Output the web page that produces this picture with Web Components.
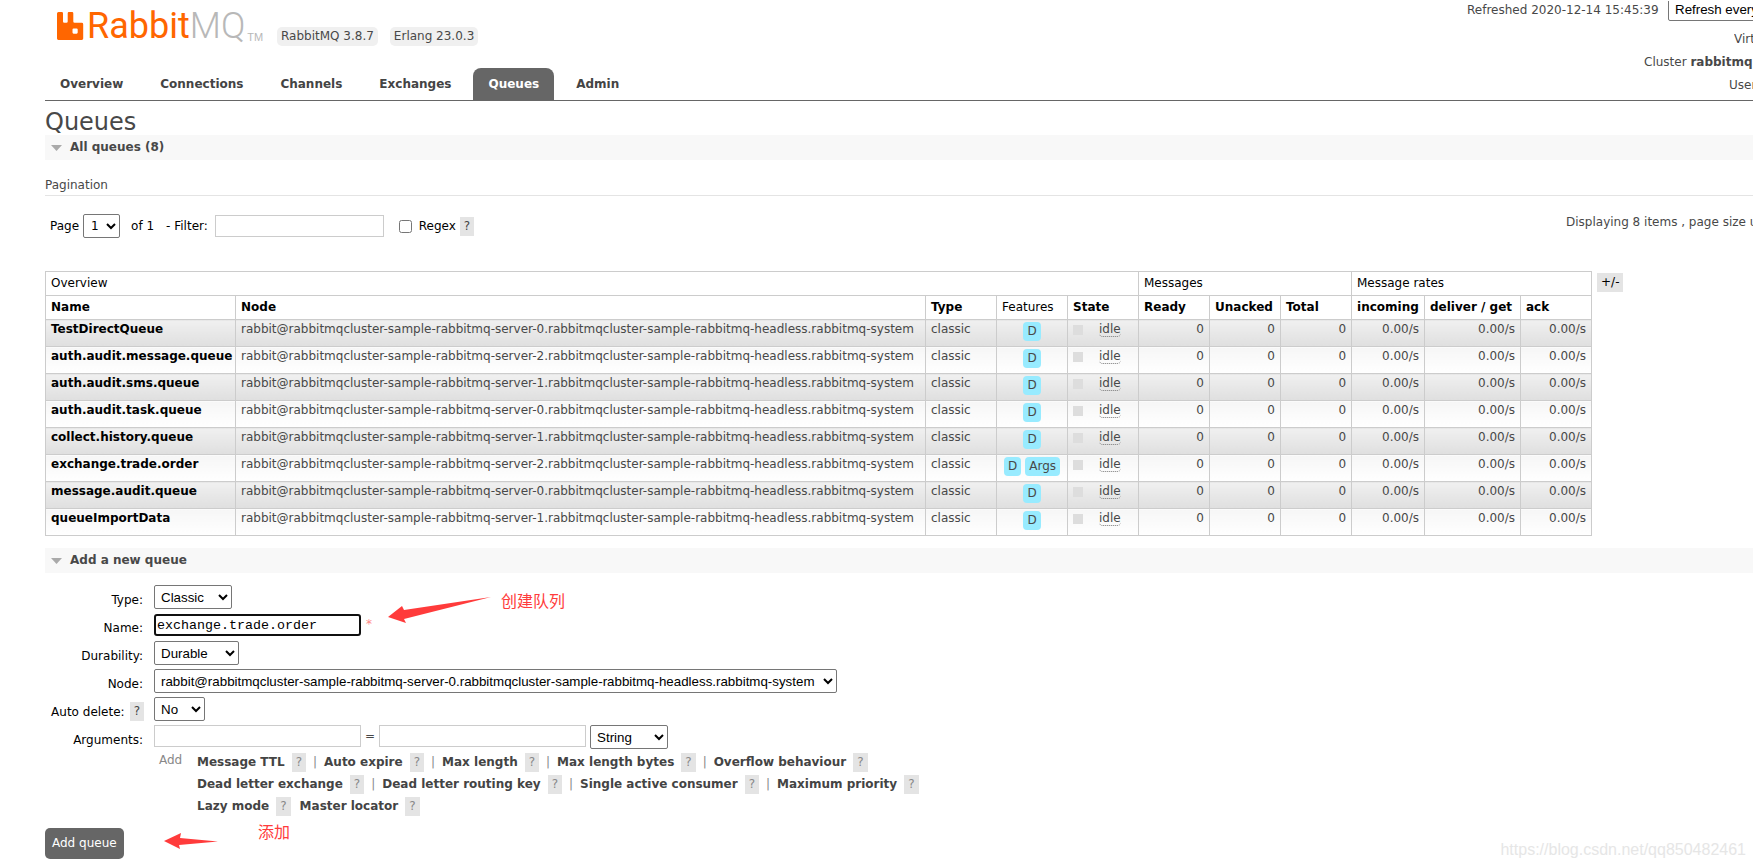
<!DOCTYPE html>
<html lang="en">
<head>
<meta charset="utf-8">
<title>RabbitMQ Management</title>
<style>
  body {
    margin: 0;
    position: relative;
    overflow-x: hidden;
    background: #fff;
    color: #484848;
    font: 12px/17px "DejaVu Sans", "Noto Sans CJK SC", sans-serif;
  }
  main {
    padding: 8px 0 9px 45px;
  }
  h1 {
    margin: 0;
    font-size: 24px;
    line-height: 26px;
    font-weight: normal;
  }
</style>
</head>
<body>
  <rmq-header></rmq-header>
  <main>
    <h1>Queues</h1>
    <rmq-section heading="All queues (8)">
      <rmq-pagination></rmq-pagination>
      <rmq-queue-table></rmq-queue-table>
    </rmq-section>
    <rmq-section heading="Add a new queue">
      <rmq-queue-form></rmq-queue-form>
    </rmq-section>
  </main>
  <rmq-watermark>https://blog.csdn.net/qq850482461</rmq-watermark>

<script>
const controls = /*css*/ `
  select, input, button { box-sizing: border-box; margin: 0; }
  select {
    height: 24px;
    padding: 0 2px;
    border: 1px solid #767676;
    border-radius: 2px;
    background-color: #fff;
    color: #000;
    font-family: "Liberation Sans", sans-serif;
  }
  input[type="text"] {
    height: 22px;
    padding: 2px;
    border: 1px solid #ccc;
    background: #fff;
    color: #000;
    font-family: "Liberation Mono", monospace;
  }
`;

class RmqElement extends HTMLElement {
  constructor() {
    super();
    this.attachShadow({ mode: "open" });
  }

  connectedCallback() {
    const template = document.createElement("template");
    template.innerHTML = this.template();
    this.shadowRoot.appendChild(template.content.cloneNode(true));
  }
}

class RmqHelp extends RmqElement {
  template() {
    return /*html*/ `
      <style>
        :host { display: inline-block; }
        a {
          display: block;
          padding: 1px 4px;
          background: #e4e4e4;
          color: inherit;
          text-decoration: none;
        }
      </style>
      <a href="#"><slot>?</slot></a>
    `;
  }
}

class RmqTab extends RmqElement {
  template() {
    return /*html*/ `
      <style>
        :host { display: block; }
        a {
          display: block;
          padding: 8px 15px 7px;
          border-radius: 8px 8px 0 0;
          color: #444;
          font-weight: bold;
          text-decoration: none;
        }
        :host([selected]) a {
          background: #666;
          color: #fff;
        }
      </style>
      <a href="#"><slot></slot></a>
    `;
  }
}

class RmqLogo extends RmqElement {
  template() {
    return /*html*/ `
      <style>
        :host { display: block; }
        a {
          display: flex;
          align-items: flex-end;
          color: #f60;
          font: 300 36px/36px Roboto, sans-serif;
          text-decoration: none;
        }
        svg { display: block; margin: 0 3px 4px 0; }
        b { font-weight: 400; }
        span { color: #b8b8b8; }
        small { color: #b8b8b8; font: 11px/14px "Liberation Sans", sans-serif; margin-left: 2px; }
      </style>
      <a href="#">
        <svg width="27" height="28" viewBox="0 0 27 28">
          <path fill="#f60" fill-rule="evenodd" d="M1.500 0h3.300q1.200 0 1.200 1.200v8.300q0 1.300 1.300 1.300h2.100q1.300 0 1.300-1.300V1.200Q10.700 0 11.900 0h3.200q1.200 0 1.200 1.200v8.300q0 1.300 1.300 1.300h7.200q1.400 0 1.400 1.400V26.600q0 1.400-1.400 1.400H1.400Q0 28 0 26.600V1.500Q0 0 1.500 0ZM16.600 16.500q-1.100 0-1.100 1.100v3q0 1.100 1.100 1.100h3q1.100 0 1.100-1.100v-3q0-1.100-1.100-1.100Z"/>
        </svg>
        <b>Rabbit</b><span>MQ</span><small>TM</small>
      </a>
    `;
  }
}

class RmqHeader extends RmqElement {
  template() {
    return /*html*/ `
      <style>
        ${controls}
        :host {
          display: flex;
          justify-content: space-between;
          margin-left: 45px;
          padding-top: 1px;
          border-bottom: 1px solid #666;
        }
        .brand {
          display: flex;
          align-items: flex-end;
          height: 43px;
          padding-left: 12px;
        }
        .version {
          margin: 0 0 -2px 12px;
          padding: 1px 4px;
          border-radius: 5px;
          background: #f0f0f0;
        }
        rmq-logo { width: 208px; }
        nav { display: flex; gap: 7px; margin-top: 24px; }
        ul {
          display: flex;
          flex-direction: column;
          align-items: flex-end;
          margin: 0;
          padding: 0;
          list-style: none;
        }
        li {
          overflow: hidden;
          white-space: nowrap;
        }
        .refresh { width: 286px; display: flex; height: 21px; line-height: 19px; }
        .refresh label { flex: 0 0 201px; }
        .refresh select { flex: none; width: 150px; margin-top: -4px; }
        .host { width: 19px; height: 32px; line-height: 34px; }
        .cluster { width: 109px; height: 17px; line-height: 17px; }
        .user { width: 24px; height: 28px; line-height: 28px; }
      </style>
      <div>
        <div class="brand">
          <rmq-logo></rmq-logo>
          <span class="version">RabbitMQ 3.8.7</span>
          <span class="version">Erlang 23.0.3</span>
        </div>
        <nav>
          <rmq-tab>Overview</rmq-tab>
          <rmq-tab>Connections</rmq-tab>
          <rmq-tab>Channels</rmq-tab>
          <rmq-tab>Exchanges</rmq-tab>
          <rmq-tab selected>Queues</rmq-tab>
          <rmq-tab>Admin</rmq-tab>
        </nav>
      </div>
      <ul>
        <li class="refresh">
          <label for="refresh">Refreshed 2020-12-14 15:45:39</label>
          <select id="refresh"><option>Refresh every</option></select>
        </li>
        <li class="host">Virt</li>
        <li class="cluster">Cluster <b>rabbitmq</b></li>
        <li class="user">User</li>
      </ul>
    `;
  }
}

class RmqSection extends RmqElement {
  template() {
    return /*html*/ `
      <style>
        :host { display: block; margin-bottom: 12px; }
        :host(:last-of-type) { margin-bottom: 0; }
        h2 {
          display: flex;
          align-items: center;
          gap: 8px;
          margin: 0;
          padding: 4px 6px;
          background: #f8f8f8;
          font-size: 12px;
          line-height: 17px;
        }
      </style>
      <h2>
        <svg width="11" height="6" viewBox="0 0 11 6"><path fill="#aaa" d="M0 0h11L5.500 6z"/></svg>
        ${this.getAttribute("heading")}
      </h2>
      <slot></slot>
    `;
  }
}

class RmqPagination extends RmqElement {
  template() {
    return /*html*/ `
      <style>
        ${controls}
        :host { display: block; padding-top: 17px; }
        h3 {
          margin: 0;
          padding-bottom: 1px;
          border-bottom: 1px solid #e4e4e4;
          font-size: 12px;
          font-weight: normal;
        }
        .row {
          display: flex;
          justify-content: space-between;
          padding: 18px 0 33px;
        }
        form {
          display: flex;
          align-items: center;
          padding-left: 5px;
          color: #000;
        }
        #page { width: 37px; margin: 0 11px 0 4px; padding-left: 3px; font-family: "DejaVu Sans", sans-serif; font-size: 12px; }
        #filter { width: 169px; margin: 0 15px 0 7px; }
        #regex { width: 13px; height: 13px; margin-right: 7px; }
        .filter { margin-left: 12px; }
        rmq-help { margin-left: 4px; color: #444; }
        .count { width: 187px; overflow: hidden; white-space: nowrap; }
      </style>
      <h3>Pagination</h3>
      <div class="row">
        <form>
          <label for="page">Page</label>
          <select id="page"><option>1</option></select>
          <span>of 1</span>
          <label class="filter" for="filter">- Filter:</label>
          <input type="text" id="filter">
          <input type="checkbox" id="regex">
          <label for="regex">Regex</label>
          <rmq-help></rmq-help>
        </form>
        <span class="count">Displaying 8 items , page size u</span>
      </div>
    `;
  }
}

const queues = [
  { name: "TestDirectQueue", server: 0 },
  { name: "auth.audit.message.queue", server: 2 },
  { name: "auth.audit.sms.queue", server: 1 },
  { name: "auth.audit.task.queue", server: 0 },
  { name: "collect.history.queue", server: 1 },
  { name: "exchange.trade.order", server: 2, args: true },
  { name: "message.audit.queue", server: 0 },
  { name: "queueImportData", server: 1 },
];

const nodeName = (n) =>
  `rabbit@rabbitmqcluster-sample-rabbitmq-server-${n}.rabbitmqcluster-sample-rabbitmq-headless.rabbitmq-system`;

class RmqQueueTable extends RmqElement {
  row(queue) {
    return /*html*/ `
      <tr>
        <td><a href="#">${queue.name}</a></td>
        <td>${nodeName(queue.server)}</td>
        <td>classic</td>
        <td class="c"><div><span class="tag">D</span>${queue.args ? '<span class="tag">Args</span>' : ""}</div></td>
        <td><div class="state"><i></i><abbr>idle</abbr></div></td>
        <td class="r">0</td>
        <td class="r">0</td>
        <td class="r">0</td>
        <td class="r">0.00/s</td>
        <td class="r">0.00/s</td>
        <td class="r">0.00/s</td>
      </tr>
    `;
  }

  template() {
    const widths = [190, 690, 71, 71, 71, 71, 71, 71, 73, 96, 71];
    return /*html*/ `
      <style>
        :host { display: flex; align-items: flex-start; gap: 5px; }
        table {
          width: 1547px;
          table-layout: fixed;
          border-collapse: collapse;
          white-space: nowrap;
        }
        th, td {
          box-sizing: border-box;
          padding: 0 5px 0 5px;
          border: 1px solid #ccc;
          text-align: left;
          vertical-align: top;
        }
        th { height: 24px; line-height: 23px; color: #000; }
        th.plain { font-weight: normal; }
        td { height: 27px; line-height: 19px; }
        td.r { text-align: right; }
        tbody tr:nth-child(odd) td { background: linear-gradient(#f0f0f0, #dfdfdf); }
        tbody tr:nth-child(even) td { background: linear-gradient(#f6f6f6, #fff); }
        a { color: #000; font-weight: bold; text-decoration: none; }
        .c div { display: flex; justify-content: center; gap: 4px; padding-top: 2px; }
        .tag {
          padding: 0 4px;
          border-radius: 4px;
          background: #98ebff;
        }
        .state { display: flex; }
        i { width: 10px; height: 10px; margin: 5px 16px 0 0; background: #ddd; }
        abbr {
          height: 16px;
          border-bottom: 1px dotted #777;
          border-radius: 4px;
        }
        rmq-help { margin-top: 2px; color: #000; }
      </style>
      <table>
        <colgroup>${widths.map((w) => `<col style="width: ${w}px">`).join("")}</colgroup>
        <thead>
          <tr>
            <th class="plain" colspan="5">Overview</th>
            <th class="plain" colspan="3">Messages</th>
            <th class="plain" colspan="3">Message rates</th>
          </tr>
          <tr>
            <th>Name</th><th>Node</th><th>Type</th><th class="plain">Features</th><th>State</th>
            <th>Ready</th><th>Unacked</th><th>Total</th>
            <th>incoming</th><th>deliver / get</th><th>ack</th>
          </tr>
        </thead>
        <tbody>${queues.map((queue) => this.row(queue)).join("")}</tbody>
      </table>
      <rmq-help>+/-</rmq-help>
    `;
  }
}

// Red hand-placed remark with an arrow, lies over the form
class RmqNote extends RmqElement {
  template() {
    return /*html*/ `
      <style>
        :host {
          position: absolute;
          display: flex;
          color: #ff3b3b;
          font: 16px/20px "Noto Sans CJK SC", sans-serif;
          pointer-events: none;
        }
      </style>
      <slot></slot>
    `;
  }
}

class RmqQueueForm extends RmqElement {
  shortcuts(names) {
    return names
      .map((name) => `<a href="#">${name}</a><rmq-help></rmq-help>`)
      .join("<i>|</i>");
  }

  template() {
    return /*html*/ `
      <style>
        ${controls}
        :host { display: block; position: relative; padding-top: 12px; }
        form {
          display: grid;
          grid-template-columns: 98px 1fr;
          column-gap: 11px;
          grid-template-rows: repeat(6, 28px) auto;
        }
        .label {
          display: flex;
          justify-content: flex-end;
          gap: 5px;
          line-height: 30px;
          color: #000;
          white-space: nowrap;
        }
        .label rmq-help { line-height: 17px; margin: 5px -1px 0 0; color: #444; }
        .field { display: flex; align-items: flex-start; gap: 4px; line-height: 22px; }
        .field input { width: 207px; }
        .field .focus {
          margin-top: 1px;
          padding: 0 1px;
          border: 2px solid #101010;
          border-radius: 3px;
        }
        em { color: #f88; font-style: normal; margin-left: 1px; }
        #type, #argtype { width: 78px; }
        #durability { width: 85px; }
        #node { width: 683px; }
        #autodelete { width: 51px; }
        .shortcuts {
          grid-column: 2;
          display: grid;
          grid-template-columns: 38px 1fr;
          padding: 0 0 9px 5px;
          color: #888;
        }
        .shortcuts > span { line-height: 15px; }
        .shortcuts p {
          display: flex;
          height: 22px;
          margin: 0;
          line-height: 19px;
        }
        .shortcuts a { margin-right: 7px; color: #444; font-weight: bold; text-decoration: none; }
        .shortcuts rmq-help { height: 19px; line-height: 17px; }
        .shortcuts i { width: 18px; text-align: center; font-style: normal; }
        .last rmq-help:not(:last-child) { margin-right: 9px; }
        button {
          display: block;
          height: 31px;
          padding: 0 7px;
          border: 0;
          border-radius: 5px;
          background: #666;
          color: #fff;
          font: 12px/31px "DejaVu Sans", sans-serif;
        }
        .create { left: 343px; top: 17px; }
        .create svg { margin: 7px 10px 0 0; }
        .add { left: 119px; bottom: 10px; height: 28px; }
        .add svg { margin-right: 40px; align-self: flex-end; }
      </style>
      <form>
        <label class="label" for="type">Type:</label>
        <div class="field"><select id="type"><option>Classic</option></select></div>
        <label class="label" for="name">Name:</label>
        <div class="field">
          <input type="text" class="focus" id="name" value="exchange.trade.order"><em>*</em>
        </div>
        <label class="label" for="durability">Durability:</label>
        <div class="field"><select id="durability"><option>Durable</option></select></div>
        <label class="label" for="node">Node:</label>
        <div class="field"><select id="node"><option>${nodeName(0)}</option></select></div>
        <div class="label"><label for="autodelete">Auto delete:</label><rmq-help></rmq-help></div>
        <div class="field"><select id="autodelete"><option>No</option></select></div>
        <label class="label" for="argkey">Arguments:</label>
        <div class="field">
          <input type="text" id="argkey"> =
          <input type="text" id="argvalue" aria-label="Value">
          <select id="argtype" aria-label="Value type"><option>String</option></select>
        </div>
        <div class="shortcuts">
          <span>Add</span>
          <div>
            <p>${this.shortcuts(["Message TTL", "Auto expire", "Max length", "Max length bytes", "Overflow behaviour"])}</p>
            <p>${this.shortcuts(["Dead letter exchange", "Dead letter routing key", "Single active consumer", "Maximum priority"])}</p>
            <p class="last"><a href="#">Lazy mode</a><rmq-help></rmq-help><a href="#">Master locator</a><rmq-help></rmq-help></p>
          </div>
        </div>
      </form>
      <button type="button">Add queue</button>
      <rmq-note class="create">
        <svg width="103" height="26" viewBox="0 0 103 26"><path fill="#ff3b3b" d="M0 20 14 9l2 4L103 0 16 22l2 4z"/></svg>
        创建队列
      </rmq-note>
      <rmq-note class="add">
        <svg width="54" height="16" viewBox="0 0 54 16"><path fill="#ff3b3b" d="M0 8 17 0l-1 5 38 3.500L15 12l1 4z"/></svg>
        添加
      </rmq-note>
    `;
  }
}

class RmqWatermark extends RmqElement {
  template() {
    return /*html*/ `
      <style>
        :host {
          position: absolute;
          right: 7px;
          bottom: 8px;
          color: #e6e6e6;
          font: 16px/20px "Liberation Sans", sans-serif;
        }
      </style>
      <slot></slot>
    `;
  }
}

customElements.define("rmq-help", RmqHelp);
customElements.define("rmq-tab", RmqTab);
customElements.define("rmq-logo", RmqLogo);
customElements.define("rmq-header", RmqHeader);
customElements.define("rmq-section", RmqSection);
customElements.define("rmq-pagination", RmqPagination);
customElements.define("rmq-queue-table", RmqQueueTable);
customElements.define("rmq-note", RmqNote);
customElements.define("rmq-queue-form", RmqQueueForm);
customElements.define("rmq-watermark", RmqWatermark);
</script>
</body>
</html>
